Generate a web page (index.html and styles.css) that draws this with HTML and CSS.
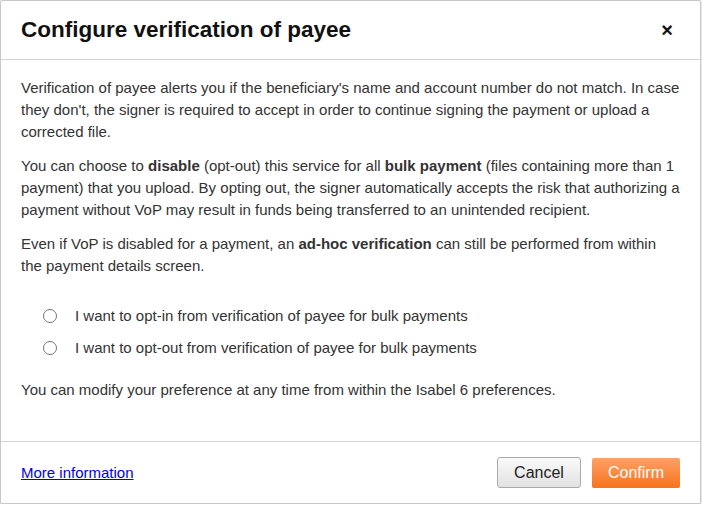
FILE: index.html
```html
<!DOCTYPE html>
<html lang="en">
<head>
  <meta charset="UTF-8">
  <title>Configure verification of payee</title>
  <link rel="stylesheet" href="styles.css">
</head>
<body>
  <div class="modal">
    <div class="modal-header">
      <h2>Configure verification of payee</h2>
      <button type="button" class="close" aria-label="Close">&times;</button>
    </div>
    <div class="modal-body">
      <p>Verification of payee alerts you if the beneficiary's name and account number do not match. In case they don't, the signer is required to accept in order to continue signing the payment or upload a corrected file.</p>
      <p>You can choose to <b>disable</b> (opt-out) this service for all <b>bulk payment</b> (files containing more than 1 payment) that you upload. By opting out, the signer automatically accepts the risk that authorizing a payment without VoP may result in funds being transferred to an unintended recipient.</p>
      <p>Even if VoP is disabled for a payment, an <b>ad-hoc verification</b> can still be performed from within the payment details screen.</p>
      <div class="options">
        <label class="option"><input type="radio" name="vop" value="in"> I want to opt-in from verification of payee for bulk payments</label>
        <label class="option"><input type="radio" name="vop" value="out"> I want to opt-out from verification of payee for bulk payments</label>
      </div>
      <p>You can modify your preference at any time from within the Isabel 6 preferences.</p>
    </div>
    <div class="modal-footer">
      <a href="#">More information</a>
      <div class="actions">
        <button type="button" class="btn btn-default">Cancel</button>
        <button type="button" class="btn btn-primary">Confirm</button>
      </div>
    </div>
  </div>
</body>
</html>
```

FILE: styles.css
```css
/* Base */
* {
  margin: 0;
  padding: 0;
  box-sizing: border-box;
}

body {
  background-color: #fff;
  font-family: 'Liberation Sans', Arial, sans-serif;
  font-size: 15px;
  color: #333;
}

/* Modal */
.modal {
  width: 701px;
  height: 504px;
  display: flex;
  flex-direction: column;
  background-color: #fff;
  border: 1px solid #c8c8c8;
  border-radius: 2px;
  box-shadow: 0 1px 3px rgba(0, 0, 0, 0.25);
}

.modal-header {
  height: 59px;
  flex-shrink: 0;
  display: flex;
  align-items: center;
  justify-content: space-between;
  padding: 0 27px 0 20px;
  border-bottom: 1px solid #d4d4d4;
}

.modal-header h2 {
  font-size: 22.5px;
  font-weight: bold;
  color: #111;
}

.close {
  background: none;
  border: none;
  font-family: 'Liberation Sans', Arial, sans-serif;
  font-size: 20px;
  font-weight: bold;
  color: #111;
  line-height: 1;
  cursor: pointer;
}

.modal-body {
  flex: 1;
  padding: 17px 20px 0;
  line-height: 22px;
}

.modal-body p {
  margin-bottom: 12px;
}

.options {
  display: flex;
  flex-direction: column;
  gap: 10px;
  padding: 16px 0 20px 22px;
}

.option {
  display: flex;
  align-items: center;
  color: #333;
}

.option input {
  width: 14px;
  height: 14px;
  margin: 0 18px 0 0;
}

/* Footer */
.modal-footer {
  height: 62px;
  flex-shrink: 0;
  display: flex;
  align-items: center;
  justify-content: space-between;
  padding: 0 20px;
  border-top: 1px solid #d4d4d4;
}

.modal-footer a {
  color: #0000ee;
}

.actions {
  display: flex;
  align-items: center;
  gap: 11px;
}

.btn {
  font-family: 'Liberation Sans', Arial, sans-serif;
  font-size: 16px;
  height: 31px;
  border-radius: 3px;
  cursor: pointer;
}

.btn-default {
  width: 84px;
  color: #222;
  background: linear-gradient(#fafafa, #e2e2e2);
  border: 1px solid #aaa;
}

.btn-primary {
  width: 88px;
  height: 30px;
  color: #fff;
  background: linear-gradient(#fea06a, #f8731c);
  border: none;
  border-radius: 2px;
}
```
